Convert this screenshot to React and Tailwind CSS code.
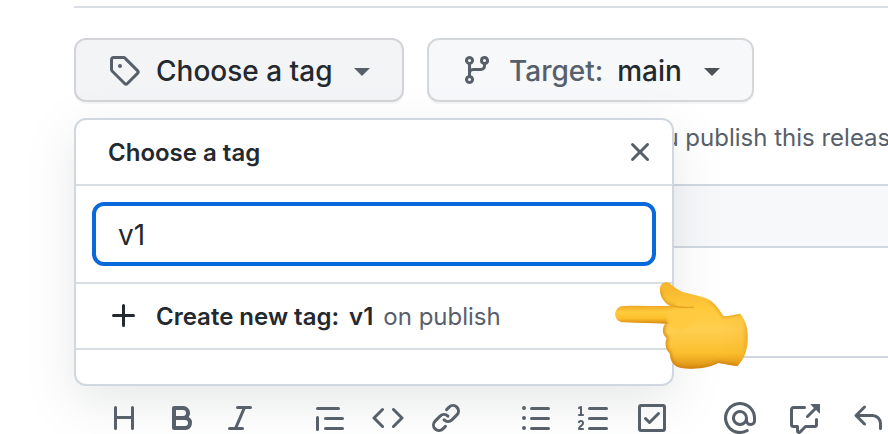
import React, { useState } from 'react';

const ICONS = {
  tag: 'M1 7.775V2.75C1 1.784 1.784 1 2.75 1h5.025c.464 0 .91.184 1.238.513l6.25 6.25a1.75 1.75 0 0 1 0 2.474l-5.026 5.026a1.75 1.75 0 0 1-2.474 0l-6.25-6.25A1.752 1.752 0 0 1 1 7.775Zm1.5 0c0 .066.026.13.073.177l6.25 6.25a.25.25 0 0 0 .354 0l5.025-5.025a.25.25 0 0 0 0-.354l-6.25-6.25a.25.25 0 0 0-.177-.073H2.75a.25.25 0 0 0-.25.25ZM6 5a1 1 0 1 1 0 2 1 1 0 0 1 0-2Z',
  branch: 'M9.5 3.25a2.25 2.25 0 1 1 3 2.122V6A2.5 2.5 0 0 1 10 8.5H6a1 1 0 0 0-1 1v1.128a2.251 2.251 0 1 1-1.5 0V5.372a2.25 2.25 0 1 1 1.5 0v1.836A2.493 2.493 0 0 1 6 7h4a1 1 0 0 0 1-1v-.628A2.25 2.25 0 0 1 9.5 3.25Zm-6 0a.75.75 0 1 0 1.5 0 .75.75 0 0 0-1.5 0Zm8.25-.75a.75.75 0 1 0 0 1.5.75.75 0 0 0 0-1.5ZM4.25 12a.75.75 0 1 0 0 1.5.75.75 0 0 0 0-1.5Z',
  close: 'M3.72 3.72a.75.75 0 0 1 1.06 0L8 6.94l3.22-3.22a.749.749 0 0 1 1.275.326.749.749 0 0 1-.215.734L9.06 8l3.22 3.22a.749.749 0 0 1-.326 1.275.749.749 0 0 1-.734-.215L8 9.06l-3.22 3.22a.751.751 0 0 1-1.042-.018.751.751 0 0 1-.018-1.042L6.94 8 3.72 4.78a.75.75 0 0 1 0-1.06Z',
  plus: 'M7.75 2a.75.75 0 0 1 .75.75V7h4.25a.75.75 0 0 1 0 1.5H8.5v4.25a.75.75 0 0 1-1.5 0V8.5H2.75a.75.75 0 0 1 0-1.5H7V2.75A.75.75 0 0 1 7.75 2Z',
  heading: 'M3.75 2a.75.75 0 0 1 .75.75V7h7V2.75a.75.75 0 0 1 1.5 0v10.5a.75.75 0 0 1-1.5 0V8.5h-7v4.75a.75.75 0 0 1-1.5 0V2.75A.75.75 0 0 1 3.75 2Z',
  bold: 'M4 2h4.5a3.501 3.501 0 0 1 2.852 5.53A3.499 3.499 0 0 1 9.5 14H4a1 1 0 0 1-1-1V3a1 1 0 0 1 1-1Zm1 7v3h4.5a1.5 1.5 0 0 0 0-3Zm3.5-2a1.5 1.5 0 0 0 0-3H5v3Z',
  italic: 'M6 2.75A.75.75 0 0 1 6.75 2h6.5a.75.75 0 0 1 0 1.5h-2.505l-3.858 9H9.25a.75.75 0 0 1 0 1.5h-6.5a.75.75 0 0 1 0-1.5h2.505l3.858-9H6.75A.75.75 0 0 1 6 2.75Z',
  quote: 'M1.75 2.5h10.5a.75.75 0 0 1 0 1.5H1.75a.75.75 0 0 1 0-1.5Zm4 5h8.5a.75.75 0 0 1 0 1.5h-8.5a.75.75 0 0 1 0-1.5Zm0 5h8.5a.75.75 0 0 1 0 1.5h-8.5a.75.75 0 0 1 0-1.5ZM2.5 7.75v6a.75.75 0 0 1-1.5 0v-6a.75.75 0 0 1 1.5 0Z',
  code: 'm11.28 3.22 4.25 4.25a.75.75 0 0 1 0 1.06l-4.25 4.25a.749.749 0 0 1-1.275-.326.749.749 0 0 1 .215-.734L13.94 8l-3.72-3.72a.749.749 0 0 1 .326-1.275.749.749 0 0 1 .734.215Zm-6.56 0a.751.751 0 0 1 1.042.018.751.751 0 0 1 .018 1.042L2.06 8l3.72 3.72a.749.749 0 0 1-.326 1.275.749.749 0 0 1-.734-.215L.47 8.53a.75.75 0 0 1 0-1.06Z',
  link: 'm7.775 3.275 1.25-1.25a3.5 3.5 0 1 1 4.95 4.95l-2.5 2.5a3.5 3.5 0 0 1-4.95 0 .751.751 0 0 1 .018-1.042.751.751 0 0 1 1.042-.018 1.998 1.998 0 0 0 2.83 0l2.5-2.5a2.002 2.002 0 0 0-2.83-2.83l-1.25 1.25a.751.751 0 0 1-1.042-.018.751.751 0 0 1-.018-1.042Zm-4.69 9.64a1.998 1.998 0 0 0 2.83 0l1.25-1.25a.751.751 0 0 1 1.042.018.751.751 0 0 1 .018 1.042l-1.25 1.25a3.5 3.5 0 1 1-4.95-4.95l2.5-2.5a3.5 3.5 0 0 1 4.95 0 .751.751 0 0 1-.018 1.042.751.751 0 0 1-1.042.018 1.998 1.998 0 0 0-2.83 0l-2.5 2.5a1.998 1.998 0 0 0 0 2.83Z',
  bullets: 'M5.75 2.5h8.5a.75.75 0 0 1 0 1.5h-8.5a.75.75 0 0 1 0-1.5Zm0 5h8.5a.75.75 0 0 1 0 1.5h-8.5a.75.75 0 0 1 0-1.5Zm0 5h8.5a.75.75 0 0 1 0 1.5h-8.5a.75.75 0 0 1 0-1.5ZM2 14a1 1 0 1 1 0-2 1 1 0 0 1 0 2Zm1-6a1 1 0 1 1-2 0 1 1 0 0 1 2 0ZM2 4a1 1 0 1 1 0-2 1 1 0 0 1 0 2Z',
  numbers: 'M5 3.25a.75.75 0 0 1 .75-.75h8.5a.75.75 0 0 1 0 1.5h-8.5A.75.75 0 0 1 5 3.25Zm0 5a.75.75 0 0 1 .75-.75h8.5a.75.75 0 0 1 0 1.5h-8.5A.75.75 0 0 1 5 8.25Zm0 5a.75.75 0 0 1 .75-.75h8.5a.75.75 0 0 1 0 1.5h-8.5a.75.75 0 0 1-.75-.75ZM.924 10.32a.5.5 0 0 1-.851-.525l.001-.001.001-.002.002-.004.007-.011c.097-.144.215-.273.348-.384.228-.19.588-.392 1.068-.392.468 0 .858.181 1.126.484.259.294.377.673.377 1.038 0 .987-.686 1.495-1.156 1.845l-.047.035c-.303.225-.522.4-.654.597h1.357a.5.5 0 0 1 0 1H.5a.5.5 0 0 1-.5-.5c0-1.005.692-1.52 1.167-1.875l.035-.025c.531-.396.8-.625.8-1.078a.57.57 0 0 0-.128-.376C1.806 10.068 1.695 10 1.5 10a.658.658 0 0 0-.429.163.835.835 0 0 0-.144.153ZM2.003 2.5V6h.503a.5.5 0 0 1 0 1H.5a.5.5 0 0 1 0-1h.503V3.308l-.28.14a.5.5 0 0 1-.446-.895l1.003-.5a.5.5 0 0 1 .723.447Z',
  tasks: 'M2.5 1h11A1.5 1.5 0 0 1 15 2.5v11a1.5 1.5 0 0 1-1.5 1.5h-11A1.5 1.5 0 0 1 1 13.5v-11A1.5 1.5 0 0 1 2.5 1Zm.25 1.5a.25.25 0 0 0-.25.25v10.5c0 .138.112.25.25.25h10.5a.25.25 0 0 0 .25-.25V2.75a.25.25 0 0 0-.25-.25Zm9.03 3.78-4.5 4.5a.75.75 0 0 1-1.06 0l-2-2a.75.75 0 0 1 1.06-1.06l1.47 1.47 3.97-3.97a.75.75 0 0 1 1.06 1.06Z',
  mention: 'M4.75 2.37a6.501 6.501 0 0 0 6.5 11.26.75.75 0 0 1 .75 1.298A7.999 7.999 0 0 1 .989 4.148 8 8 0 0 1 16 7.75v1.5a2.75 2.75 0 0 1-5.072 1.475 3.999 3.999 0 0 1-6.65-4.19A4 4 0 0 1 12 8v1.25a1.25 1.25 0 0 0 2.5 0V7.867a6.5 6.5 0 0 0-9.75-5.496ZM10.5 8a2.5 2.5 0 1 0-5 0 2.5 2.5 0 0 0 5 0Z',
  reference: 'M2.75 3.5a.25.25 0 0 0-.25.25v7.5c0 .138.112.25.25.25h2a.75.75 0 0 1 .75.75v2.19l2.72-2.72a.749.749 0 0 1 .53-.22h4.5a.25.25 0 0 0 .25-.25v-2.5a.75.75 0 0 1 1.5 0v2.5A1.75 1.75 0 0 1 13.25 13H9.06l-2.573 2.573A1.458 1.458 0 0 1 4 14.543V13H2.75A1.75 1.75 0 0 1 1 11.25v-7.5C1 2.784 1.784 2 2.75 2h5.5a.75.75 0 0 1 0 1.5ZM16 1.25v4.146a.25.25 0 0 1-.427.177L14.03 4.03l-3.75 3.75a.749.749 0 0 1-1.275-.326.749.749 0 0 1 .215-.734l3.75-3.75-1.543-1.543A.25.25 0 0 1 11.604 1h4.146a.25.25 0 0 1 .25.25Z',
  reply: 'M6.78 1.97a.75.75 0 0 1 0 1.06L3.81 6h6.44A4.75 4.75 0 0 1 15 10.75v2.5a.75.75 0 0 1-1.5 0v-2.5a3.25 3.25 0 0 0-3.25-3.25H3.81l2.97 2.97a.749.749 0 0 1-.326 1.275.749.749 0 0 1-.734-.215L1.47 7.28a.75.75 0 0 1 0-1.06l4.25-4.25a.75.75 0 0 1 1.06 0Z',
};

const Icon = ({ name, className = 'text-[#57606a]' }) => (
  <svg viewBox="0 0 16 16" fill="currentColor" aria-hidden="true" className={`size-8 shrink-0 ${className}`}>
    <path d={ICONS[name]} />
  </svg>
);

const Caret = ({ className }) => (
  <svg viewBox="0 0 16 8" fill="currentColor" aria-hidden="true" className={`w-4 h-2 mt-1 shrink-0 ${className}`}>
    <path d="M0 0h16L8 8Z" />
  </svg>
);

const ToolGroup = ({ tools, className = 'gap-[26px]' }) => (
  <div className={`flex ${className}`}>
    {tools.map((name) => (
      <button key={name} type="button" aria-label={name}>
        <Icon name={name} />
      </button>
    ))}
  </div>
);

const PointingHand = () => (
  <svg viewBox="102 63 405 267" aria-hidden="true" className="absolute left-[538px] top-[161px] w-[135px] h-[89px]">
    <defs>
      <linearGradient id="skin" x1="0" y1="0" x2="0" y2="1">
        <stop offset="0" stopColor="#f5b32c" />
        <stop offset="0.3" stopColor="#ffc93a" />
        <stop offset="0.55" stopColor="#ffcf50" />
        <stop offset="0.82" stopColor="#fbbf2e" />
        <stop offset="1" stopColor="#dc8f16" />
      </linearGradient>
      <linearGradient id="finger" x1="0" y1="0" x2="0" y2="1">
        <stop offset="0" stopColor="#eda823" />
        <stop offset="0.35" stopColor="#ffcc3c" />
        <stop offset="0.7" stopColor="#fdbf2b" />
        <stop offset="1" stopColor="#d58a12" />
      </linearGradient>
      <linearGradient id="wrist" x1="0" y1="0" x2="1" y2="0">
        <stop offset="0" stopColor="#e69a1a" stopOpacity="0" />
        <stop offset="0.75" stopColor="#e69a1a" stopOpacity="0.1" />
        <stop offset="1" stopColor="#d98c14" stopOpacity="0.75" />
      </linearGradient>
      <filter id="soft" x="-20%" y="-20%" width="140%" height="140%">
        <feGaussianBlur stdDeviation="5" />
      </filter>
      <clipPath id="palm">
        <path d="M240 92C238 77 247 66 260 67C273 68 280 84 308 96C342 105 374 110 392 122C412 137 421 155 431 169C449 168 464 164 481 161C498 183 504 207 503 238C502 270 493 298 472 319L415 309C385 325 340 329 304 324C280 320 271 304 269 280C256 268 254 251 260 235C246 222 245 207 256 190L270 138C250 125 241 109 240 92Z" />
      </clipPath>
    </defs>
    <path
      d="M240 92C238 77 247 66 260 67C273 68 280 84 308 96C342 105 374 110 392 122C412 137 421 155 431 169C449 168 464 164 481 161C498 183 504 207 503 238C502 270 493 298 472 319L415 309C385 325 340 329 304 324C280 320 271 304 269 280C256 268 254 251 260 235C246 222 245 207 256 190L270 138C250 125 241 109 240 92Z"
      fill="url(#skin)"
    />
    <g clipPath="url(#palm)">
      <path d="M415 160C430 165 460 165 510 150V330L412 309C425 260 425 210 415 160Z" fill="url(#wrist)" />
      <path d="M240 90C240 115 258 137 285 138" fill="none" stroke="#d58a14" strokeWidth="9" opacity="0.7" filter="url(#soft)" />
      <path d="M256 190C245 207 246 222 260 235C254 251 256 268 269 280C271 304 280 320 304 324C340 329 385 325 415 309L472 319" fill="none" stroke="#cb7c10" strokeWidth="12" opacity="0.65" filter="url(#soft)" />
      <path d="M392 122C412 137 421 155 431 169L481 161" fill="none" stroke="#d98f16" strokeWidth="9" opacity="0.6" filter="url(#soft)" />
    </g>
    <path d="M131 138C180 136 230 139 280 138C310 138 325 141 342 141L330 185C300 188 280 192 256 191C215 189 175 190 131 187C97 185 97 140 131 138Z" fill="url(#finger)" />
    <path d="M262 150C290 142 320 142 350 143C365 170 345 200 300 210C275 208 265 196 262 185Z" fill="#ffca40" filter="url(#soft)" />
    <path d="M280 138C300 143 318 143 342 141" fill="none" stroke="#dc9419" strokeWidth="3" opacity="0.8" />
  </svg>
);

const TagPicker = ({ onClose }) => {
  const [tag, setTag] = useState('v1');

  return (
    <div
      role="dialog"
      aria-labelledby="picker-title"
      className="absolute left-0 top-20 z-10 w-[600px] bg-white border-2 border-[#d0d7de] rounded-xl shadow-[0_16px_48px_rgba(120,126,132,0.18)]"
    >
      <div className="flex items-center justify-between h-16 pl-8 pr-4">
        <h2 id="picker-title" className="pt-0.5 text-2xl font-semibold">Choose a tag</h2>
        <button type="button" aria-label="Close" onClick={onClose}>
          <Icon name="close" />
        </button>
      </div>
      <div className="p-4 border-y-2 border-[#d8dee4]">
        <input
          type="text"
          aria-label="Find or create a tag"
          value={tag}
          onChange={(e) => setTag(e.target.value)}
          className="block w-full h-16 px-[22px] pt-0.5 text-[28px] border-4 border-[#0969da] rounded-xl outline-none"
        />
      </div>
      <button type="button" className="flex items-center gap-4 w-full h-16 pl-8 text-2xl">
        <Icon name="plus" className="text-[#24292f]" />
        <span className="flex gap-2.5 pt-0.5 whitespace-nowrap text-[#57606a]">
          <b className="font-semibold text-[#24292f]">Create new tag:</b>
          <b className="font-semibold text-[#24292f]">{tag}</b>
          <span>on publish</span>
        </span>
      </button>
      <div className="h-9 border-t-2 border-[#d8dee4]" />
      <PointingHand />
    </div>
  );
};

export default function App() {
  const [open, setOpen] = useState(true);

  return (
    <main className="overflow-hidden pl-[74px] pt-1.5 bg-white text-[#24292f] font-['Inter',sans-serif]">
      <hr className="border-t-2 border-[#d8dee4]" />

      <div className="relative flex gap-[23px] mt-[30px]">
        <button
          type="button"
          aria-expanded={open}
          onClick={() => setOpen(!open)}
          className="flex items-center h-16 w-[330px] px-8 bg-[#f3f4f6] border-2 border-[#d2d4d7] rounded-xl text-[28px] font-medium shadow-[0_2px_0_rgba(27,31,36,0.04)]"
        >
          <Icon name="tag" />
          <span className="ml-4 pt-0.5 whitespace-nowrap">Choose a tag</span>
          <Caret className="ml-auto text-[#57606a]" />
        </button>
        <button
          type="button"
          className="flex items-center h-16 w-[327px] px-8 bg-[#f6f8fa] border-2 border-[#d5d8da] rounded-xl text-[28px] font-medium shadow-[0_2px_0_rgba(27,31,36,0.04)]"
        >
          <Icon name="branch" />
          <span className="ml-4 pt-0.5 whitespace-nowrap text-[#57606a]">Target:</span>
          <span className="ml-3.5 pt-0.5">main</span>
          <Caret className="ml-auto text-[#4d5258]" />
        </button>
        {open && <TagPicker onClose={() => setOpen(false)} />}
      </div>

      <p className="mt-5 pl-[563px] h-8 leading-8 text-2xl whitespace-nowrap text-[#57606a]">
        you publish this releas
      </p>
      <input
        type="text"
        aria-label="Release title"
        className="block mt-[30px] w-full h-16 bg-[#f6f8fa] border-y-2 border-[#d0d7de] outline-none"
      />

      <div className="mt-27 border-t-2 border-[#d0d7de]" />
      <div role="toolbar" aria-label="Formatting" className="flex gap-14 mt-11 pl-[34px]">
        <div className="flex gap-[58px]">
          <ToolGroup tools={['heading', 'bold', 'italic']} />
          <ToolGroup tools={['quote', 'code', 'link']} />
          <ToolGroup tools={['bullets', 'numbers', 'tasks']} />
        </div>
        <ToolGroup tools={['mention', 'reference', 'reply']} className="gap-8" />
      </div>
    </main>
  );
}
